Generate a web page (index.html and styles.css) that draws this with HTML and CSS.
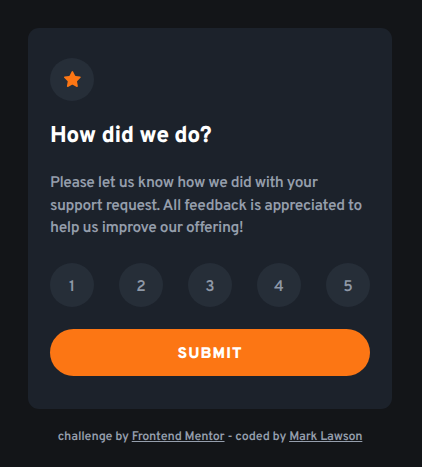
FILE: index.html
```html
<!DOCTYPE html>
<html lang="en">
<head>
<meta charset="utf-8">
<title>Rating</title>
<link rel="stylesheet" href="styles.css">
</head>
<body>
<main class="card">
  <div class="badge">
    <svg width="17" height="16" viewBox="0 0 17 16"><path d="m9.067.43 1.99 4.031c.112.228.33.386.58.422l4.45.647a.772.772 0 0 1 .427 1.316l-3.22 3.138a.773.773 0 0 0-.222.683l.76 4.431a.772.772 0 0 1-1.12.813l-3.98-2.092a.773.773 0 0 0-.718 0l-3.98 2.092a.772.772 0 0 1-1.119-.813l.76-4.431a.77.77 0 0 0-.222-.683L.233 6.846A.772.772 0 0 1 .661 5.53l4.449-.647a.772.772 0 0 0 .58-.422L7.68.43a.774.774 0 0 1 1.387 0Z" fill="#fc7614"/></svg>
  </div>
  <h1 class="title">How did we do?</h1>
  <p class="copy">Please let us know how we did with your<br>support request. All feedback is appreciated to<br>help us improve our offering!</p>
  <div class="ratings">
    <button class="rating">1</button>
    <button class="rating">2</button>
    <button class="rating">3</button>
    <button class="rating">4</button>
    <button class="rating">5</button>
  </div>
  <button class="submit">SUBMIT</button>
</main>
<footer class="credit">challenge by <a href="#">Frontend Mentor</a> - coded by <a href="#">Mark Lawson</a></footer>
</body>
</html>
```

FILE: styles.css
```css
* { box-sizing: border-box; }
body {
  margin: 0;
  padding: 28px 30px 0 28px;
  height: 467px;
  overflow: hidden;
  background: #131518;
  font-family: Overpass, Roboto, sans-serif;
  text-rendering: geometricPrecision;
}
.card {
  width: 364px;
  height: 381px;
  padding: 30px 22px 0;
  border-radius: 11px;
  background: #1c222b;
}
.badge, .rating {
  display: flex;
  align-items: center;
  justify-content: center;
  width: 44px;
  height: 44px;
  border-radius: 50%;
  background: #262e38;
}
.badge {
  height: 43px;
  padding-bottom: 1px;
}
.title {
  margin: 20px 0 0;
  font: 800 23px/32px Overpass, Roboto, sans-serif;
  letter-spacing: -0.38px;
  color: #fff;
  white-space: nowrap;
}
.copy {
  margin: 19px 0 0;
  font: 600 15.5px/22.5px Overpass, Roboto, sans-serif;
  letter-spacing: -0.43px;
  color: #959eac;
  white-space: nowrap;
}
.ratings {
  display: flex;
  justify-content: space-between;
  margin-top: 23.5px;
}
.rating {
  padding: 3px 0 0;
  border: 0;
  font: 600 15.5px/20px Overpass, Roboto, sans-serif;
  color: #8e98a7;
  text-rendering: inherit;
}
.submit {
  display: block;
  width: 320px;
  height: 47px;
  margin-top: 22px;
  padding: 3px 0 0;
  border: 0;
  border-radius: 24px;
  background: #fc7614;
  color: #fff;
  font: 900 15.5px/20px Overpass, Roboto, sans-serif;
  letter-spacing: 1.05px;
  text-rendering: inherit;
}
.credit {
  margin-top: 19px;
  font: 600 12.5px/18px Overpass, Roboto, sans-serif;
  letter-spacing: -0.16px;
  text-align: center;
  color: #959eac;
  white-space: nowrap;
}
.credit a { color: inherit; }
```
